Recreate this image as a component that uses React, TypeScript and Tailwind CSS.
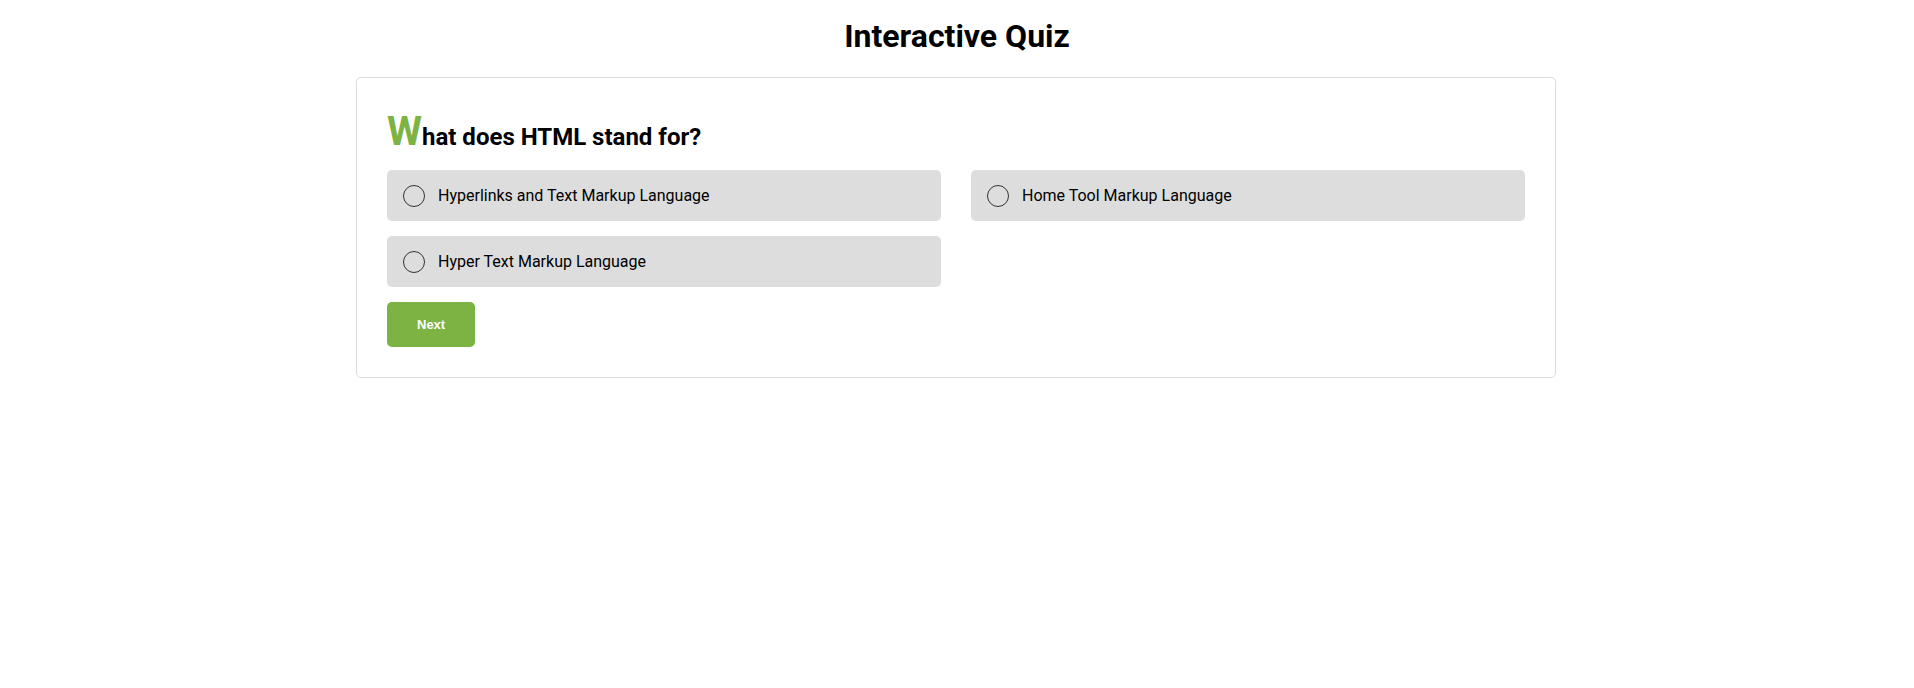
const options = [
  "Hyperlinks and Text Markup Language",
  "Home Tool Markup Language",
  "Hyper Text Markup Language",
];

export default function App() {
  return (
    <div className="min-h-screen bg-white font-['Roboto',sans-serif] text-black">
      <h1 className="pt-[18px] text-center text-[32px] font-bold leading-[37px]">Interactive Quiz</h1>
      <div className="mx-auto mt-[22px] w-[1200px] -translate-x-px rounded-[5px] border border-[#dddddd] p-[30px]">
        <h2 className="mt-[4px] flex items-baseline text-[24px] font-bold leading-[28px]">
          <span className="text-[40px] leading-[40px] text-[#7cb342]">W</span>
          hat does HTML stand for?
        </h2>
        <div className="mt-[18px] grid grid-cols-2 gap-x-[30px] gap-y-[15px]">
          {options.map((option) => (
            <label
              key={option}
              className="flex h-[51px] cursor-pointer items-center gap-[13px] rounded-[5px] bg-[#dddddd] px-[16px] text-[16px]"
            >
              <span className="h-[22px] w-[22px] rounded-full border border-[#333333] bg-[#dddddd]" />
              {option}
            </label>
          ))}
        </div>
        <button
          className="mt-[15px] rounded-[5px] bg-[#7cb342] px-[30px] py-[15px] font-['Liberation_Sans',sans-serif] text-[13px] font-bold leading-[15px] text-white"
          type="button"
        >
          Next
        </button>
      </div>
    </div>
  );
}
